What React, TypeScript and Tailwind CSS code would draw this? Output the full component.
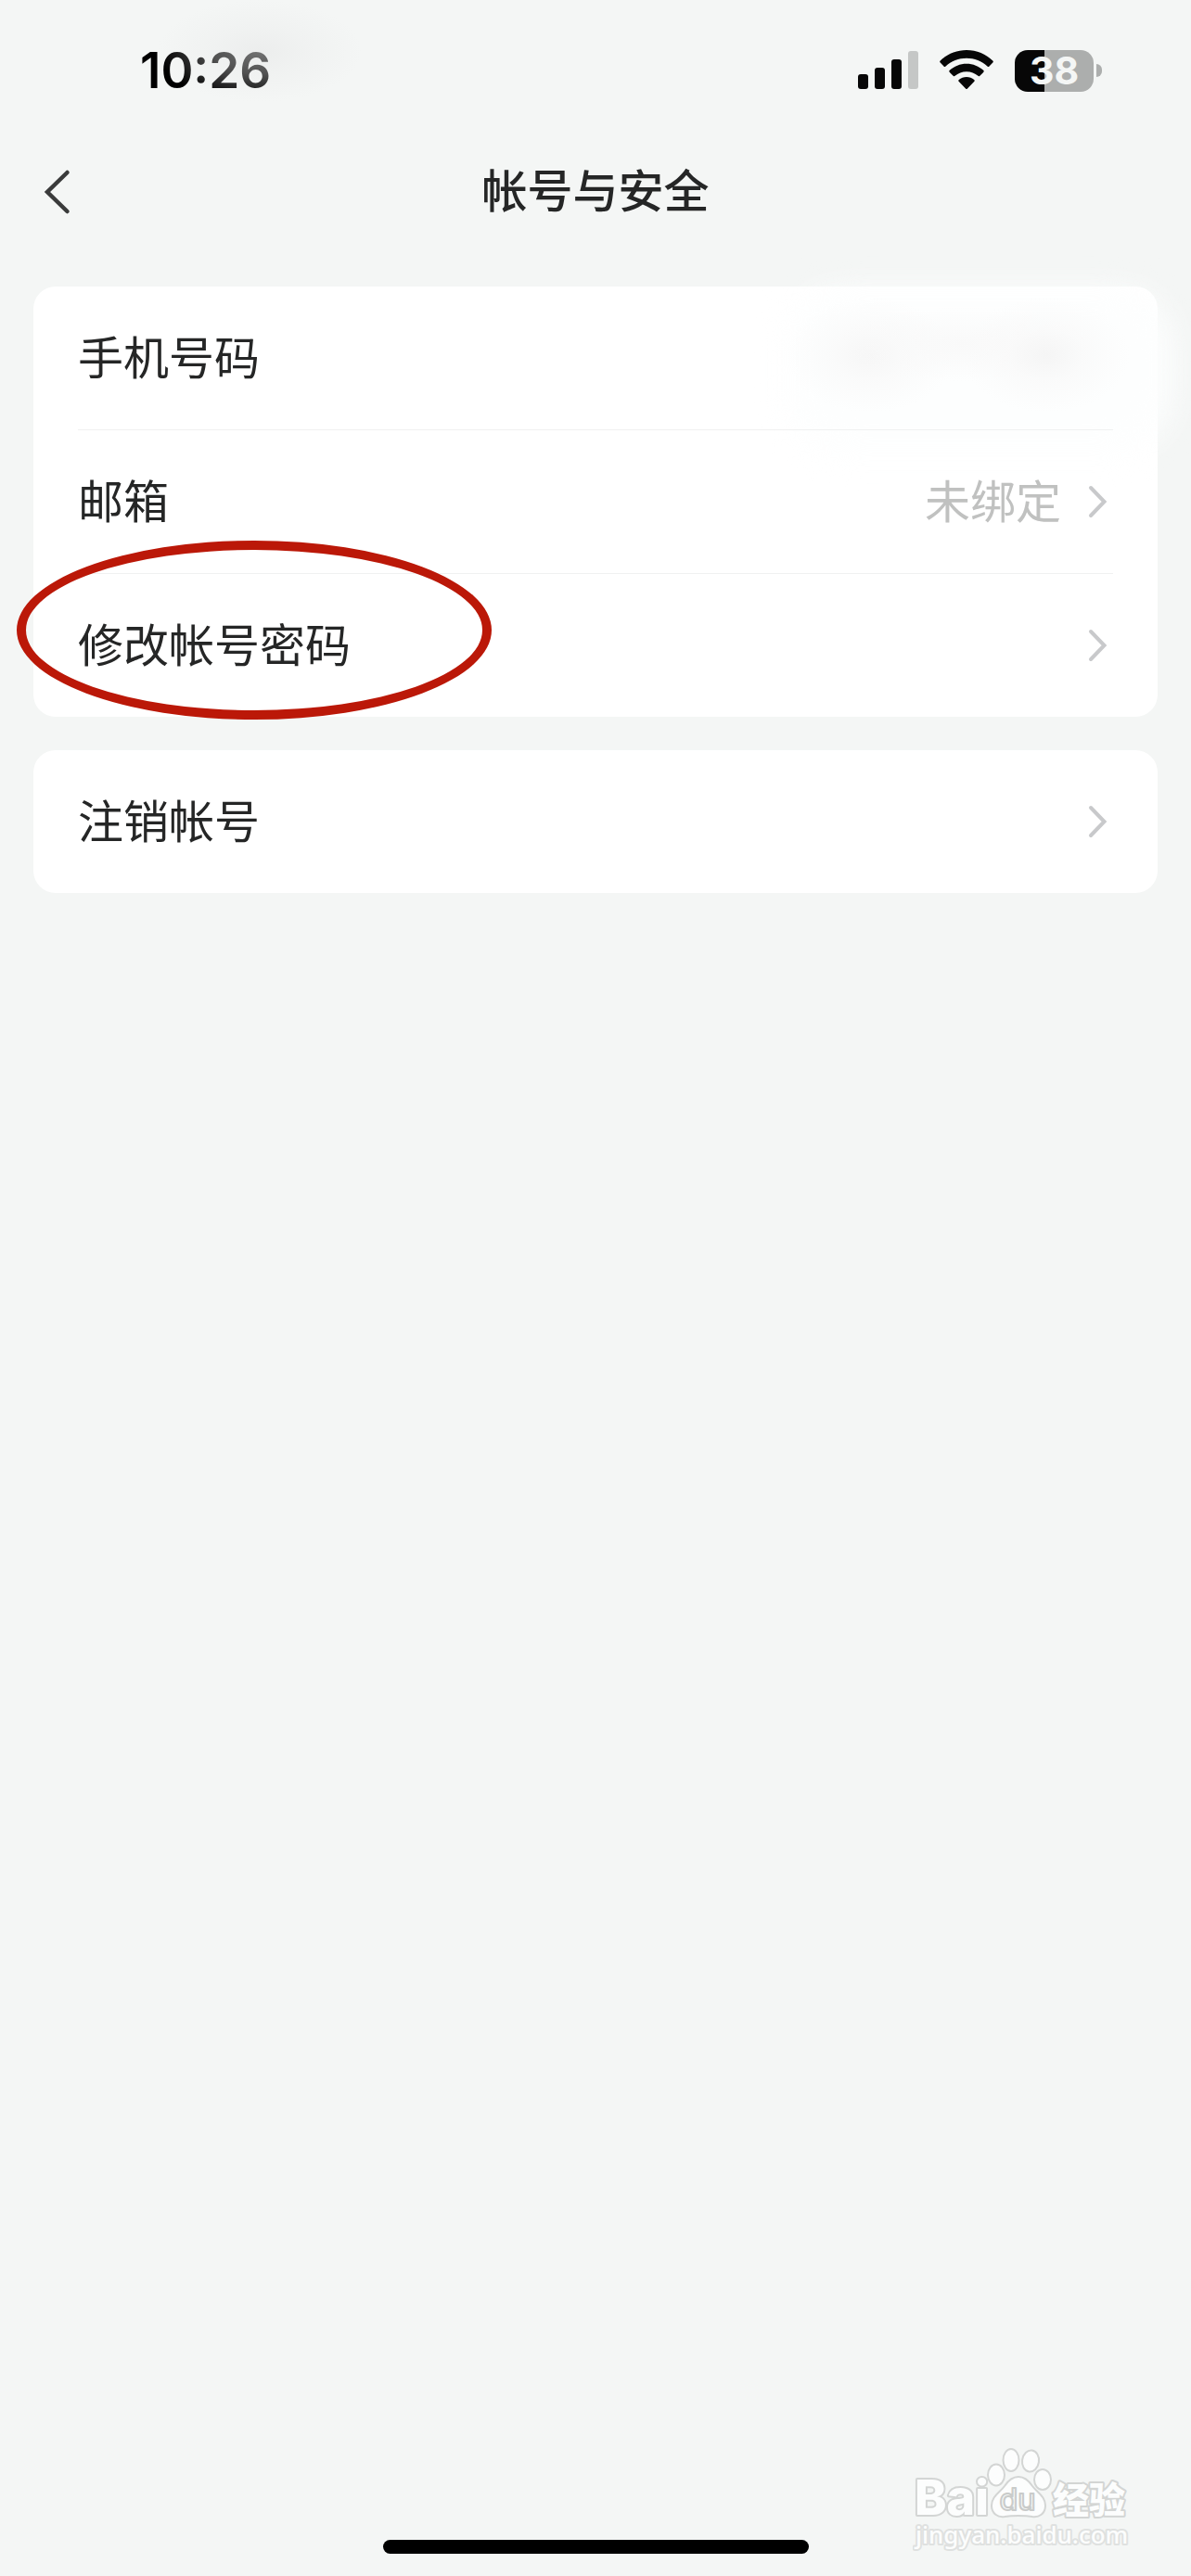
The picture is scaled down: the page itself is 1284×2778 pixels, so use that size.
import clsx from "clsx";

interface RowProps {
    label: string;
    value?: string;
    hasArrow?: boolean;
    redacted?: boolean;
    circled?: boolean;
}

const accountRows: RowProps[] = [
    { label: "手机号码", redacted: true },
    { label: "邮箱", value: "未绑定", hasArrow: true },
    { label: "修改帐号密码", hasArrow: true, circled: true },
];

const cancelRows: RowProps[] = [{ label: "注销帐号", hasArrow: true }];

function ArrowRight() {
    return (
        <svg
            width="24"
            height="40"
            viewBox="0 0 24 40"
            fill="none"
            stroke="#c8c9cb"
            strokeWidth="4"
            strokeLinecap="round"
            aria-hidden="true"
        >
            <path d="M4 4l14.500 15L4 34" strokeLinejoin="miter" />
        </svg>
    );
}

function StatusBar() {
    return (
        <div className="relative flex h-[152px] items-center justify-between pr-24 pl-[151px]">
            <time className="text-[53px] leading-[60px] font-semibold text-black">10:26</time>
            <div className="absolute top-0 left-[170px] h-[110px] w-[220px] bg-[radial-gradient(closest-side,#e4e5e580,#e9eaea59_45%,#f4f6f500)]" />

            <div className="flex items-center gap-[23px]">
                <svg width="65" height="46" viewBox="0 0 65 46" aria-label="信号">
                    <rect x="0" y="27" width="11" height="16" rx="3" fill="#070707" />
                    <rect x="18" y="20" width="11" height="23" rx="3" fill="#070707" />
                    <rect x="36" y="11" width="11" height="32" rx="3" fill="#070707" />
                    <rect x="54" y="2" width="11" height="41" rx="3" fill="#c5c7c6" />
                </svg>
                <svg width="58" height="46" viewBox="0 0 58 46" fill="#070707" aria-label="无线网络">
                    <path d="M29 1c11 0 21 4.300 28.300 11.500.7.700.7 1.400 0 2.100l-3.800 3.800c-.7.700-1.300.7-2 0C45.500 13 37.500 9.700 29 9.700S12.500 13 6.500 18.400c-.7.700-1.300.7-2 0L.7 14.600c-.7-.7-.7-1.400 0-2.100C8 5.300 18 1 29 1z" />
                    <path d="M29 15.700c7 0 13.400 2.700 18.200 7.100.7.700.7 1.400 0 2.100l-3.800 3.800c-.7.700-1.300.7-2 .1-3.300-2.900-7.600-4.600-12.400-4.600s-9.100 1.700-12.400 4.600c-.7.600-1.300.6-2-.1l-3.800-3.800c-.7-.7-.7-1.400 0-2.100 4.800-4.400 11.200-7.100 18.200-7.100z" />
                    <path d="M29 30c3.100 0 6 1.100 8.200 3 .7.600.7 1.300 0 2l-7.200 7.400c-.7.700-1.300.7-2 0L20.800 35c-.7-.7-.7-1.400 0-2 2.200-1.900 5.100-3 8.200-3z" />
                </svg>
                <div className="flex items-center gap-[3px]">
                    <div className="flex h-[45px] w-[85px] items-center justify-center rounded-[14px] bg-[linear-gradient(to_right,#070707_32px,#acaead_32px)]">
                        <span className="text-[41px] leading-[45px] font-bold text-[#f4f6f5]">38</span>
                    </div>
                    <div className="h-[14px] w-[6px] rounded-r-full bg-[#acaead]" />
                </div>
            </div>
        </div>
    );
}

function NavBar() {
    return (
        <header className="grid h-[110px] grid-cols-[120px_1fr_120px] items-center">
            <button type="button" aria-label="返回" className="flex h-full items-center pl-11">
                <svg
                    width="36"
                    height="52"
                    viewBox="0 0 36 52"
                    fill="none"
                    stroke="#3a3b3b"
                    strokeWidth="4.500"
                    strokeLinecap="round"
                >
                    <path d="M28.500 5L7 26l21.500 21" />
                </svg>
            </button>
            <h1 className="text-center text-[49px] leading-[60px] font-medium text-[#252626]">
                帐号与安全
            </h1>
        </header>
    );
}

/* soft patch that hides the bound phone number */
function Redaction() {
    return (
        <div className="pointer-events-none absolute -top-2 -right-[72px] h-[196px] w-[430px]">
            <div className="absolute inset-x-2 inset-y-3 rounded-[60px] bg-[#fdfefe] blur-[18px]" />
            <div className="absolute top-[20px] left-[6px] h-[124px] w-[180px] bg-[radial-gradient(closest-side,#f6f6f6,#f9f9f9b3_45%,#ffffff00)]" />
            <div className="absolute top-[30px] left-[60px] h-[80px] w-[270px] bg-[radial-gradient(closest-side,#f9f9f9,#ffffff00)]" />
            <div className="absolute top-[20px] left-[196px] h-[124px] w-[180px] bg-[radial-gradient(closest-side,#f5f5f5,#f9f9f9b3_45%,#ffffff00)]" />
        </div>
    );
}

function Row({ label, value, hasArrow, redacted, circled }: RowProps) {
    return (
        <li className="relative border-t border-[#f0f1f1] first:border-t-0">
            <button type="button" className="flex h-[154px] w-full items-center pt-[2px] text-left">
                <span className="flex-1 text-[49px] leading-[60px] text-[#252626]">{label}</span>
                {value && <span className="text-[49px] leading-[60px] text-[#c0c1c0]">{value}</span>}
                {hasArrow && (
                    <span className={clsx("pr-1", value && "pl-7")}>
                        <ArrowRight />
                    </span>
                )}
            </button>
            {redacted && <Redaction />}
            {circled && (
                <div className="pointer-events-none absolute -top-9 -left-[66px] z-10 h-[193px] w-[512px] rounded-[50%] border-[10px] border-[#bb1808]" />
            )}
        </li>
    );
}

function Card({ rows }: { rows: RowProps[] }) {
    return (
        <ul className="rounded-[24px] bg-white px-12">
            {rows.map((row) => (
                <Row key={row.label} {...row} />
            ))}
        </ul>
    );
}

function Watermark() {
    return (
        <svg
            className="pointer-events-none absolute right-[40px] bottom-[20px]"
            width="260"
            height="120"
            viewBox="0 0 260 120"
            fill="#fcfdfd"
            stroke="#d3d5d4"
            strokeWidth="2"
            strokeLinejoin="round"
        >
            <text
                x="2"
                y="74"
                fontFamily="Inter, sans-serif"
                fontSize="52"
                fontWeight="800"
                strokeWidth="4"
                style={{ paintOrder: "stroke" }}
            >
                Bai
            </text>
            <ellipse cx="90" cy="31" rx="9" ry="11.500" />
            <ellipse cx="106" cy="15" rx="8.500" ry="12" />
            <ellipse cx="127" cy="16" rx="9" ry="11.500" transform="rotate(8 127 16)" />
            <ellipse cx="140" cy="36" rx="9" ry="11" />
            <path d="M114 33c7 0 11 4 15 10 5 7 14 11 14 21 0 9-7 13-14 12-6-1-9-1-15-1s-9 0-15 1c-7 1-14-3-14-12 0-10 9-14 14-21 4-6 8-10 15-10z" />
            <text
                x="113"
                y="69"
                textAnchor="middle"
                fontFamily="Inter, sans-serif"
                fontSize="32"
                fontWeight="500"
                fill="#f4f6f5"
                stroke="#c9cbca"
            >
                du
            </text>
            <text
                x="151"
                y="72"
                fontFamily="'Noto Sans CJK SC', sans-serif"
                fontSize="39"
                fontWeight="900"
                strokeWidth="4"
                style={{ paintOrder: "stroke" }}
            >
                经验
            </text>
            <text
                x="3"
                y="105"
                fontFamily="'Noto Sans', sans-serif"
                fontSize="26"
                fontWeight="500"
                strokeWidth="4"
                stroke="#dfe1e0"
                style={{ paintOrder: "stroke" }}
            >
                jingyan.baidu.com
            </text>
        </svg>
    );
}

export default function App() {
    return (
        <div className="relative flex min-h-screen flex-col overflow-hidden bg-[#f4f6f5] font-[Inter,'Noto_Sans_CJK_SC',sans-serif]">
            <StatusBar />
            <NavBar />
            <main className="flex flex-col gap-9 px-9 pt-[47px]">
                <Card rows={accountRows} />
                <Card rows={cancelRows} />
            </main>
            <footer className="mt-auto flex justify-center pb-6">
                <div className="h-[15px] w-[459px] rounded-full bg-black" />
            </footer>
            <Watermark />
        </div>
    );
}
